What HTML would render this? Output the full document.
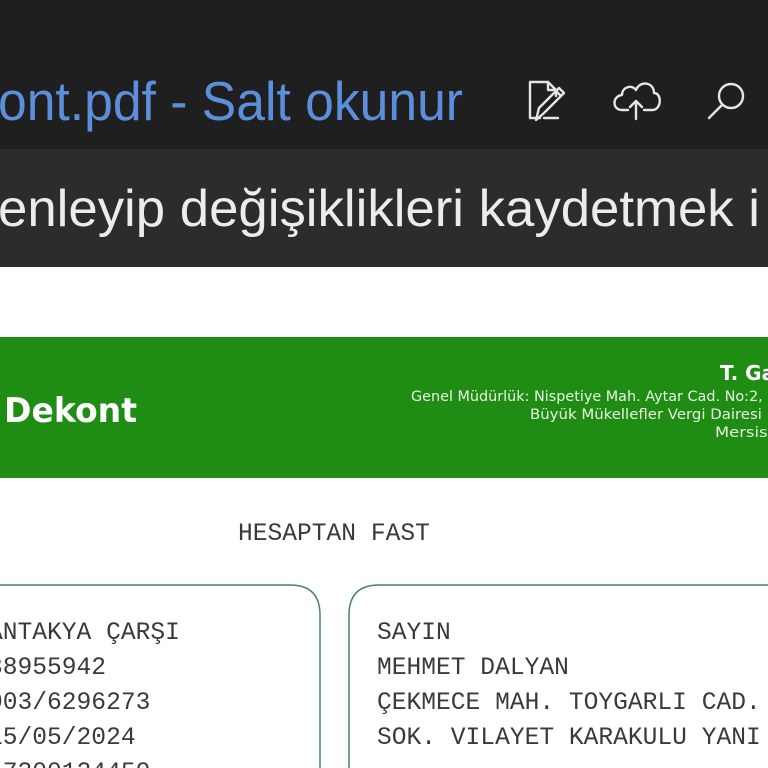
<!DOCTYPE html>
<html><head><meta charset="utf-8"><style>
html,body{margin:0;padding:0;width:768px;height:768px;overflow:hidden;background:#fff}
</style></head><body>
<svg width="768" height="768" xmlns="http://www.w3.org/2000/svg" style="display:block">
<rect x="0" y="0" width="768" height="149" fill="#1f1f1f"/>
<rect x="0" y="149" width="768" height="118" fill="#2c2c2c"/>
<rect x="0" y="267" width="768" height="501" fill="#ffffff"/>
<text x="-2" y="120" font-family="Liberation Sans, sans-serif" font-size="55" fill="#5b8fdc" textLength="465" lengthAdjust="spacingAndGlyphs">ont.pdf - Salt okunur</text>
<text x="-2" y="226" font-family="Liberation Sans, sans-serif" font-size="52" fill="#ececec" textLength="762" lengthAdjust="spacingAndGlyphs">enleyip değişiklikleri kaydetmek i</text>
<g fill="none" stroke="#e6e6e6" stroke-width="2.4" stroke-linejoin="round" stroke-linecap="round">
<path d="M540 118 L530 118 L530 82 L548 82 L556 90 L556 96"/>
<path d="M548 82 L548 90 L556 90"/>
<path d="M558 118 L544 118"/>
<path d="M536 120 L539 108 L559 88 L564 93 L544 113 Z"/>
<path d="M556 91 L561 96"/>
<path d="M628 110 L622 110 C612 110 612 96 622 95 C622 87 632 84 636 90 C640 80 654 82 654 93 C662 93 662 110 652 110 L644 110"/>
<path d="M636 119 L636 101 M630 107 L636 101 L642 107"/>
<circle cx="731" cy="96" r="12"/>
<path d="M722 105 L709 118"/>
</g>
<rect x="0" y="337" width="768" height="141" fill="#1f8c14"/>
<text x="4" y="422" font-family="DejaVu Sans, sans-serif" font-weight="bold" font-size="34" fill="#ffffff" textLength="133" lengthAdjust="spacingAndGlyphs">Dekont</text>
<text x="720" y="380" font-family="DejaVu Sans, sans-serif" font-weight="bold" font-size="20" fill="#ffffff">T. Ga</text>
<g font-family="DejaVu Sans, sans-serif" font-size="14" fill="#e8f5e0">
<text x="411" y="401" textLength="375" lengthAdjust="spacingAndGlyphs">Genel Müdürlük: Nispetiye Mah. Aytar Cad. No:2, Be</text>
<text x="530" y="419" textLength="256" lengthAdjust="spacingAndGlyphs">Büyük Mükellefler Vergi Dairesi Ba</text>
<text x="715" y="437" textLength="70" lengthAdjust="spacingAndGlyphs">Mersis N</text>
</g>
<g font-family="Liberation Mono, monospace" font-size="24.6" fill="#3a3a3a">
<text x="238" y="540">HESAPTAN FAST</text>
<text x="-12" y="639">ANTAKYA ÇARŞI</text>
<text x="-12" y="674">38955942</text>
<text x="-12" y="709">003/6296273</text>
<text x="-12" y="744">15/05/2024</text>
<text x="-12" y="779">17300124450</text>
<text x="377" y="639">SAYIN</text>
<text x="377" y="674">MEHMET DALYAN</text>
<text x="377" y="709">ÇEKMECE MAH. TOYGARLI CAD.</text>
<text x="377" y="744">SOK. VILAYET KARAKULU YANI</text>
</g>
<g fill="none" stroke="#4d7f6c" stroke-width="1.5">
<path d="M-10 585 L290 585 Q320 585 320 615 L320 780"/>
<path d="M349 780 L349 615 Q349 585 379 585 L790 585"/>
</g>
</svg>
</body></html>
